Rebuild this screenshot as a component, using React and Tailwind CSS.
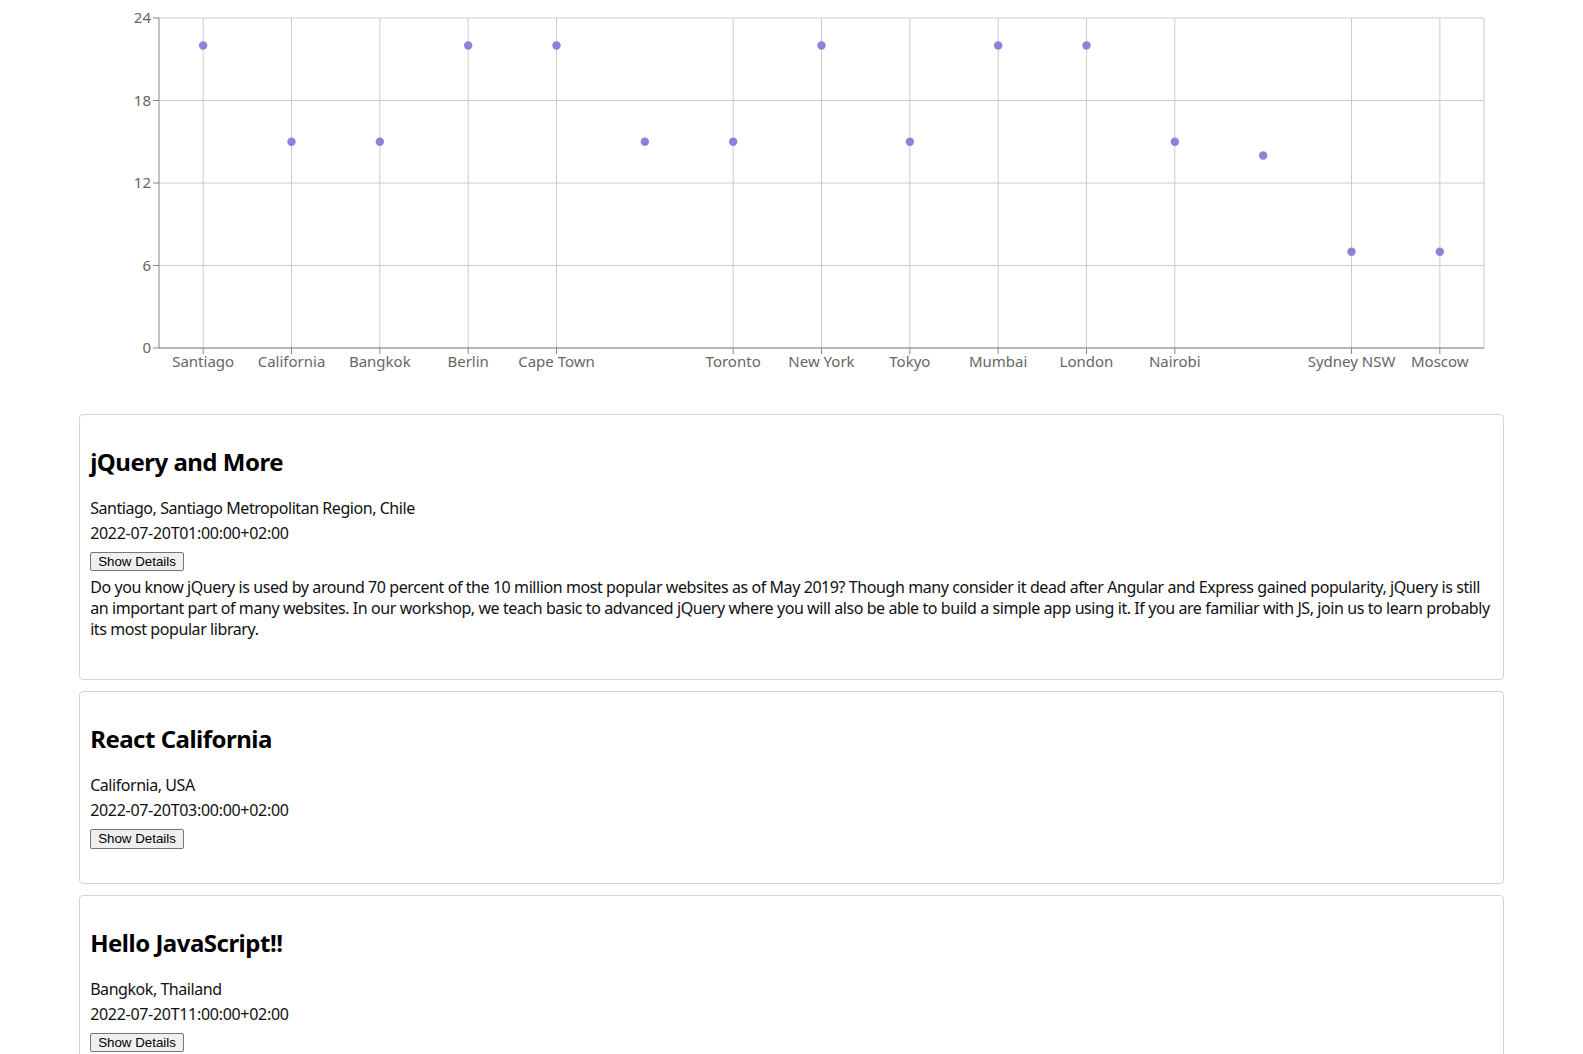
const font = { fontFamily: '"Noto Sans", "Open Sans", sans-serif' };

const points = [
  { name: "Santiago", value: 22, tick: true },
  { name: "California", value: 15, tick: true },
  { name: "Bangkok", value: 15, tick: true },
  { name: "Berlin", value: 22, tick: true },
  { name: "Cape Town", value: 22, tick: true },
  { name: "", value: 15, tick: false },
  { name: "Toronto", value: 15, tick: true },
  { name: "New York", value: 22, tick: true },
  { name: "Tokyo", value: 15, tick: true },
  { name: "Mumbai", value: 22, tick: true },
  { name: "London", value: 22, tick: true },
  { name: "Nairobi", value: 15, tick: true },
  { name: "", value: 14, tick: false },
  { name: "Sydney NSW", value: 7, tick: true },
  { name: "Moscow", value: 7, tick: true },
];

const events = [
  {
    title: "jQuery and More",
    place: "Santiago, Santiago Metropolitan Region, Chile",
    date: "2022-07-20T01:00:00+02:00",
    description:
      "Do you know jQuery is used by around 70 percent of the 10 million most popular websites as of May 2019? Though many consider it dead after Angular and Express gained popularity, jQuery is still an important part of many websites. In our workshop, we teach basic to advanced jQuery where you will also be able to build a simple app using it. If you are familiar with JS, join us to learn probably its most popular library.",
  },
  {
    title: "React California",
    place: "California, USA",
    date: "2022-07-20T03:00:00+02:00",
  },
  {
    title: "Hello JavaScript!!",
    place: "Bangkok, Thailand",
    date: "2022-07-20T11:00:00+02:00",
  },
];

// plot box inside the svg
const LEFT = 80;
const RIGHT = 1405;
const TOP = 18;
const BOTTOM = 348;
const band = (RIGHT - LEFT) / points.length;
const xOf = (i) => LEFT + band * (i + 0.5);
const yOf = (v) => BOTTOM - (v * (BOTTOM - TOP)) / 24;

function ScatterChart() {
  const yTicks = [0, 6, 12, 18, 24];
  return (
    <svg width="1425" height="390" className="block" style={font}>
      {yTicks.map((t) => (
        <line
          key={"h" + t}
          x1={LEFT}
          x2={RIGHT}
          y1={yOf(t)}
          y2={yOf(t)}
          stroke={t === 24 ? "#dddddd" : "#cccccc"}
          strokeWidth={t === 24 ? 1.6 : 1}
        />
      ))}
      {points.map((p, i) =>
        p.tick ? (
          <line key={"v" + i} x1={xOf(i)} x2={xOf(i)} y1={TOP} y2={BOTTOM} stroke="#cccccc" />
        ) : null
      )}
      <line x1={RIGHT} x2={RIGHT} y1={TOP} y2={BOTTOM} stroke="#dddddd" strokeWidth="1.6" />

      <line x1={LEFT} x2={LEFT} y1={TOP} y2={BOTTOM} stroke="#888888" />
      <line x1={LEFT} x2={RIGHT} y1={BOTTOM} y2={BOTTOM} stroke="#888888" />

      {yTicks.map((t) => (
        <g key={"yt" + t}>
          <line x1={LEFT - 6} x2={LEFT} y1={yOf(t)} y2={yOf(t)} stroke="#888888" />
          <text x={LEFT - 8} y={yOf(t)} dy="0.355em" textAnchor="end" fill="#666666" fontSize="15">
            {t}
          </text>
        </g>
      ))}

      {points.map((p, i) =>
        p.tick ? (
          <g key={"xt" + i}>
            <line x1={xOf(i)} x2={xOf(i)} y1={BOTTOM} y2={BOTTOM + 6} stroke="#888888" />
            <text x={xOf(i)} y={BOTTOM + 8} dy="0.71em" textAnchor="middle" fill="#666666" fontSize="15">
              {p.name}
            </text>
          </g>
        ) : null
      )}

      {points.map((p, i) => (
        <circle key={"d" + i} cx={xOf(i)} cy={yOf(p.value)} r="4.2" fill="#8884d8" />
      ))}
    </svg>
  );
}

function EventCard({ event }) {
  return (
    <div className="rounded-[4px] border border-[#d4d4d4] px-[10px] pt-[31px] pb-[34px] text-[#111]">
      <h2 className="text-[24px] leading-[32px] font-bold tracking-[-0.5px] text-black">{event.title}</h2>
      <div className="mt-[20px] text-[16px] leading-[21px] tracking-[-0.45px]">{event.place}</div>
      <div className="mt-[4px] text-[16px] leading-[21px] tracking-[-0.3px]">{event.date}</div>
      <button
        className="mt-[8px] block rounded-[2px] border border-[#767676] bg-[#efefef] px-[7px] py-[1px] text-[13.33px] leading-[15.33px] text-black"
        style={{ fontFamily: '"Liberation Sans", Arial, sans-serif' }}
      >
        Show Details
      </button>
      {event.description && (
        <p className="mt-[6px] mb-[5px] text-[16px] leading-[21px] tracking-[-0.42px]">
          {event.description}
        </p>
      )}
    </div>
  );
}

export default function App() {
  return (
    <div className="min-h-screen bg-white" style={font}>
      <div className="mx-auto w-[90%]">
        <ScatterChart />
        <div className="mt-[24px] flex flex-col gap-[11px]">
          {events.map((e) => (
            <EventCard key={e.title} event={e} />
          ))}
        </div>
      </div>
    </div>
  );
}
